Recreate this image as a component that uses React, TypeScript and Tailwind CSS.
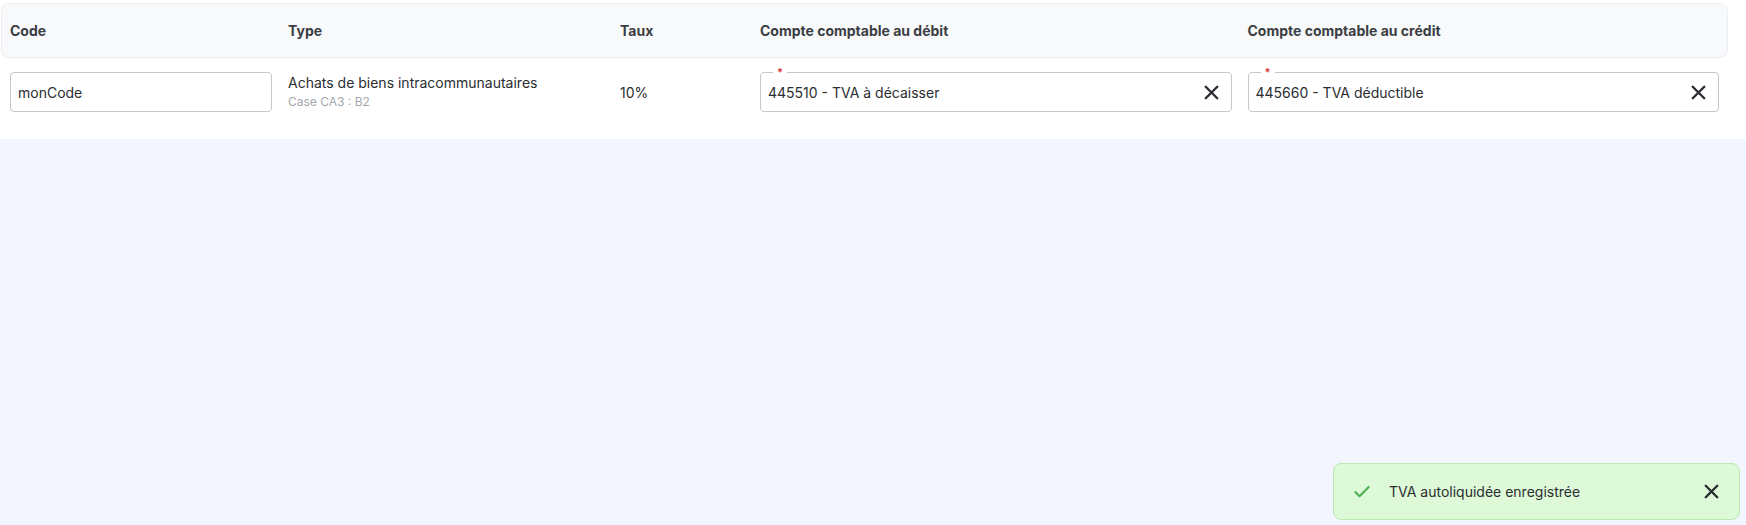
import { Check, X } from 'lucide-react';

type AccountFieldProps = { value: string };

function AccountField({ value }: AccountFieldProps) {
  return (
    <div className="relative flex h-[40px] items-center rounded border border-[#c3c6cb] bg-white pl-[7px] pr-[8px]">
      <span className="absolute -top-[8px] left-[12px] bg-white px-[4px] text-[11px] font-bold leading-[14px] text-[#d9363e]">*</span>
      <span className="flex-1 truncate text-[14px] text-[#2b2d31]">{value}</span>
      <button className="flex items-center justify-center text-[#2b2d31]">
        <X size={23} strokeWidth={2.5} />
      </button>
    </div>
  );
}

export default function App() {
  return (
    <div className="min-h-screen bg-[#f3f6fe] font-['Inter',sans-serif] text-[#2b2d31]">
      <div className="bg-white pl-[1px] pr-[18px] pt-[3px] pb-[27px]">
        <div className="grid h-[55px] grid-cols-[262px_316px_124px_1fr_1fr] items-center gap-x-4 rounded-lg border border-[#eceef1] bg-[#f8f9fa] px-2 text-[14px] font-bold text-[#3b3e44]">
          <div>Code</div>
          <div>Type</div>
          <div>Taux</div>
          <div>Compte comptable au débit</div>
          <div>Compte comptable au crédit</div>
        </div>

        <div className="mt-[14px] grid grid-cols-[262px_316px_124px_1fr_1fr] items-center gap-x-4 px-[9px]">
          <div className="flex h-[40px] items-center rounded border border-[#c3c6cb] px-[7px] text-[14px]">monCode</div>
          <div className="flex flex-col">
            <span className="text-[14px] leading-[20px]">Achats de biens intracommunautaires</span>
            <span className="text-[12px] leading-[18px] text-[#a3a7ad]">Case CA3 : B2</span>
          </div>
          <div className="text-[14px]">10%</div>
          <AccountField value="445510 - TVA à décaisser" />
          <AccountField value="445660 - TVA déductible" />
        </div>
      </div>

      <div className="fixed bottom-[5px] right-[6px] flex h-[57px] w-[407px] items-center rounded-lg border border-[#b9e9b0] bg-[#ddf9d8] pl-[18px] pr-[16px]">
        <Check size={20} strokeWidth={2.5} className="text-[#4caf50]" />
        <span className="ml-[17px] flex-1 text-[14px] text-[#2b2d31]">TVA autoliquidée enregistrée</span>
        <X size={23} strokeWidth={2.5} className="text-[#2b2d31]" />
      </div>
    </div>
  );
}
